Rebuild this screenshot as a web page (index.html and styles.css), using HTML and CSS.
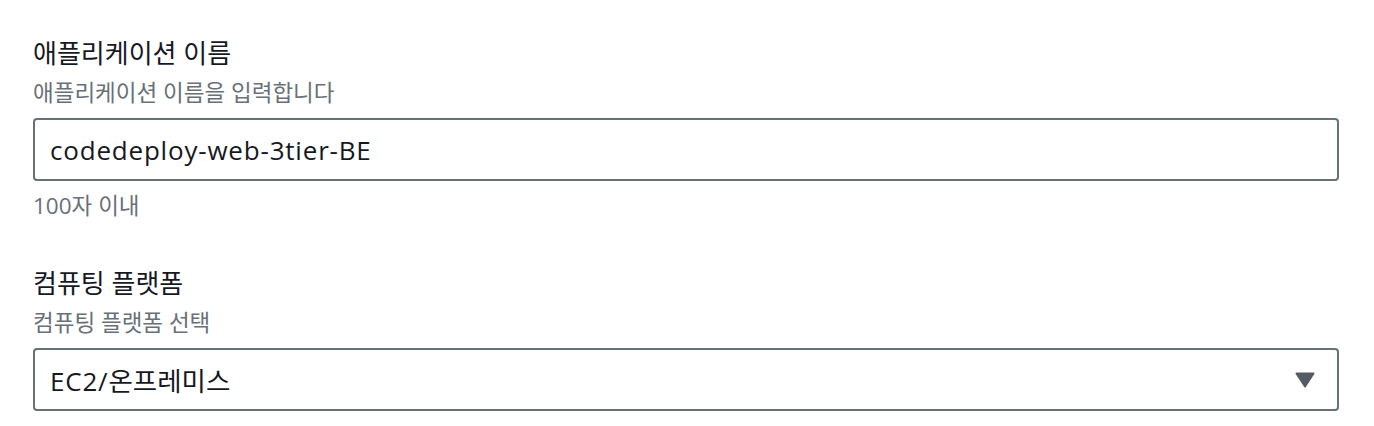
FILE: index.html
```html
<!DOCTYPE html>
<html lang="ko">
<head>
<meta charset="utf-8">
<link rel="stylesheet" href="styles.css">
</head>
<body>
<div class="form">
  <div class="field">
    <div class="label">애플리케이션 이름</div>
    <div class="desc">애플리케이션 이름을 입력합니다</div>
    <div class="control"><span class="value">codedeploy-web-3tier-BE</span></div>
    <div class="hint">100자 이내</div>
  </div>
  <div class="field second">
    <div class="label">컴퓨팅 플랫폼</div>
    <div class="desc">컴퓨팅 플랫폼 선택</div>
    <div class="control select">
      <span class="value">EC2/<span class="ko">온프레미스</span></span>
      <svg class="caret" width="20" height="16" viewBox="0 0 20 16"><path d="M1.5 1.5 H18.5 L10 14.5 Z" fill="#545b64" stroke="#545b64" stroke-width="2" stroke-linejoin="round"/></svg>
    </div>
  </div>
</div>
</body>
</html>
```
FILE: styles.css
```css
html, body { margin: 0; padding: 0; background: #ffffff; }
body {
  font-family: "Open Sans", "Noto Sans CJK KR", sans-serif;
  color: #16191f;
}
.form { padding: 36px 35px 0 33px; }
.field { display: flex; flex-direction: column; }
.second { margin-top: 45px; }
.label { font-size: 26px; line-height: 34px; }
.desc { font-size: 22.5px; line-height: 30px; color: #687078; margin-top: 8px; margin-bottom: 10px; }
.control {
  height: 63px;
  box-sizing: border-box;
  border: 2px solid #687078;
  border-radius: 4px;
  padding: 0 15px;
  display: flex;
  align-items: center;
}
.value { font-size: 26px; font-weight: 500; letter-spacing: 0.8px; }
.ko { font-weight: 400; letter-spacing: 0; font-size: 26.5px; }
.select { justify-content: space-between; padding-right: 22px; }
.hint { font-size: 22.5px; line-height: 30px; color: #687078; margin-top: 10px; }
```
